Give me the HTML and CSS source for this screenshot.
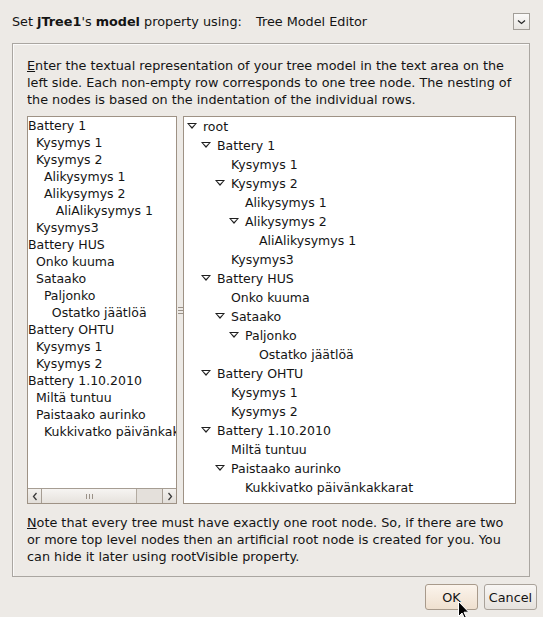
FILE: index.html
```html
<!DOCTYPE html>
<html>
<head>
<meta charset="utf-8">
<title>Tree Model Editor</title>
<link rel="stylesheet" href="styles.css">
</head>
<body>
<div class="dialog">
  <div class="header">
    <div class="title"><span class="label">Set <b>jTree1</b>'s <b>model</b> property using:</span><span class="editor">Tree Model Editor</span></div>
    <div class="combo"><svg width="9" height="6" viewBox="0 0 9 6"><path d="M1 1.5 L4.5 4.5 L8 1.5" fill="none" stroke="#2a2a2a" stroke-width="1.3"/></svg></div>
  </div>
  <div class="panel">
    <p class="desc"><u>E</u>nter the textual representation of your tree model in the text area on the left side. Each non-empty row corresponds to one tree node. The nesting of the nodes is based on the indentation of the individual rows.</p>
    <div class="split">
      <div class="textarea">
        <div class="lines">Battery 1
  Kysymys 1
  Kysymys 2
    Alikysymys 1
    Alikysymys 2
       AliAlikysymys 1
  Kysymys3
Battery HUS
  Onko kuuma
  Sataako
    Paljonko
      Ostatko jäätlöä
Battery OHTU
  Kysymys 1
  Kysymys 2
Battery 1.10.2010
  Miltä tuntuu
  Paistaako aurinko
    Kukkivatko päivänkakkarat</div>
        <div class="hscroll">
          <div class="sb-btn left"><svg width="6" height="9" viewBox="0 0 6 9"><path d="M4.5 1 L1.5 4.5 L4.5 8" fill="none" stroke="#3a3a3a" stroke-width="1.3"/></svg></div>
          <div class="thumb"><span class="grip"></span><span class="grip"></span><span class="grip"></span></div>
          <div class="track"></div>
          <div class="sb-btn right"><svg width="6" height="9" viewBox="0 0 6 9"><path d="M1.5 1 L4.5 4.5 L1.5 8" fill="none" stroke="#3a3a3a" stroke-width="1.3"/></svg></div>
        </div>
      </div>
      <div class="divider"><span></span><span></span><span></span></div>
      <div class="tree">
        <div class="row" style="padding-left:3px"><span class="tog open"></span>root</div>
        <div class="row" style="padding-left:17px"><span class="tog open"></span>Battery 1</div>
        <div class="row" style="padding-left:31px"><span class="tog"></span>Kysymys 1</div>
        <div class="row" style="padding-left:31px"><span class="tog open"></span>Kysymys 2</div>
        <div class="row" style="padding-left:45px"><span class="tog"></span>Alikysymys 1</div>
        <div class="row" style="padding-left:45px"><span class="tog open"></span>Alikysymys 2</div>
        <div class="row" style="padding-left:59px"><span class="tog"></span>AliAlikysymys 1</div>
        <div class="row" style="padding-left:31px"><span class="tog"></span>Kysymys3</div>
        <div class="row" style="padding-left:17px"><span class="tog open"></span>Battery HUS</div>
        <div class="row" style="padding-left:31px"><span class="tog"></span>Onko kuuma</div>
        <div class="row" style="padding-left:31px"><span class="tog open"></span>Sataako</div>
        <div class="row" style="padding-left:45px"><span class="tog open"></span>Paljonko</div>
        <div class="row" style="padding-left:59px"><span class="tog"></span>Ostatko jäätlöä</div>
        <div class="row" style="padding-left:17px"><span class="tog open"></span>Battery OHTU</div>
        <div class="row" style="padding-left:31px"><span class="tog"></span>Kysymys 1</div>
        <div class="row" style="padding-left:31px"><span class="tog"></span>Kysymys 2</div>
        <div class="row" style="padding-left:17px"><span class="tog open"></span>Battery 1.10.2010</div>
        <div class="row" style="padding-left:31px"><span class="tog"></span>Miltä tuntuu</div>
        <div class="row" style="padding-left:31px"><span class="tog open"></span>Paistaako aurinko</div>
        <div class="row" style="padding-left:45px"><span class="tog"></span>Kukkivatko päivänkakkarat</div>
      </div>
    </div>
    <p class="note"><u>N</u>ote that every tree must have exactly one root node. So, if there are two or more top level nodes then an artificial root node is created for you. You can hide it later using rootVisible property.</p>
  </div>
  <div class="buttons">
    <button class="btn ok">OK</button>
    <button class="btn">Cancel</button>
  </div>
  <svg class="cursor" width="12" height="19" viewBox="0 0 12 19"><path d="M0.5 0.5 L0.5 15.5 L4 12 L6.5 17.5 L8.5 16.6 L6 11.2 L10.8 11.2 Z" fill="#000" stroke="#fff" stroke-width="1"/></svg>
</div>
</body>
</html>
```
FILE: styles.css
```css
html, body {
  margin: 0;
  padding: 0;
}
body {
  background: #edeae6;
  font-family: "DejaVu Sans", sans-serif;
  font-size: 12.8px;
  color: #141414;
  width: 543px;
  height: 617px;
  overflow: hidden;
}
.dialog {
  position: relative;
  width: 543px;
  height: 617px;
}
.header {
  height: 43px;
  display: flex;
  align-items: center;
  justify-content: space-between;
  padding: 0 13px 0 12px;
  box-sizing: border-box;
}
.title {
  white-space: nowrap;
}
.label {
  display: inline-block;
  width: 244px;
}
.combo {
  width: 17px;
  height: 17px;
  box-sizing: border-box;
  border: 1px solid #a29e98;
  background: linear-gradient(#fbfaf9, #e8e5e1);
  display: flex;
  align-items: center;
  justify-content: center;
}
.panel {
  margin: 0 13px 0 12px;
  height: 534px;
  box-sizing: border-box;
  border: 1px solid #aaa6a1;
  box-shadow: inset 1px 1px 0 #fbfaf9;
  padding: 13px 13px 0 14px;
}
.desc, .note {
  margin: 0;
  line-height: 17px;
}
.split {
  display: flex;
  height: 388px;
  margin-top: 8px;
}
.textarea {
  width: 150px;
  box-sizing: border-box;
  border: 1px solid #9e9285;
  background: #fff;
  display: flex;
  flex-direction: column;
}
.lines {
  flex: 1;
  white-space: pre;
  overflow: hidden;
  font-size: 12.5px;
  line-height: 17px;
}
.hscroll {
  height: 14px;
  display: flex;
  border-top: 1px solid #a69d93;
  background: #e2ded9;
}
.sb-btn {
  width: 14px;
  box-sizing: border-box;
  background: linear-gradient(#f3f1ee, #e2ded9);
  display: flex;
  align-items: center;
  justify-content: center;
}
.sb-btn.left {
  border-right: 1px solid #a69d93;
}
.sb-btn.right {
  border-left: 1px solid #a69d93;
}
.thumb {
  width: 95px;
  box-sizing: border-box;
  border-right: 1px solid #b3aba1;
  background: linear-gradient(#f6f4f2, #e6e2dd);
  display: flex;
  align-items: center;
  justify-content: center;
  gap: 2px;
}
.grip {
  width: 1px;
  height: 5px;
  background: #9a9187;
}
.track {
  flex: 1;
  background: #e4e0db;
}
.divider {
  width: 6px;
  display: flex;
  flex-direction: column;
  align-items: center;
  justify-content: center;
  gap: 2px;
}
.divider span {
  width: 5px;
  height: 1px;
  background: #9a9289;
}
.tree {
  flex: 1;
  box-sizing: border-box;
  border: 1px solid #9e9285;
  background: #fff;
  font-size: 12.5px;
}
.row {
  height: 19px;
  display: flex;
  align-items: center;
  white-space: nowrap;
}
.tog {
  width: 16px;
  height: 19px;
  flex: none;
  position: relative;
}
.tog.open::before {
  content: "";
  position: absolute;
  left: 0;
  top: 6px;
  width: 0;
  height: 0;
  border-left: 5px solid transparent;
  border-right: 5px solid transparent;
  border-top: 6px solid #1e1e1e;
}
.tog.open::after {
  content: "";
  position: absolute;
  left: 2px;
  top: 7px;
  width: 0;
  height: 0;
  border-left: 3px solid transparent;
  border-right: 3px solid transparent;
  border-top: 3.6px solid #fff;
}
.note {
  margin-top: 10px;
}
.buttons {
  display: flex;
  justify-content: flex-end;
  gap: 6px;
  padding-right: 6px;
  margin-top: 7px;
}
.btn {
  width: 53px;
  height: 26px;
  box-sizing: border-box;
  padding: 0;
  font-family: "DejaVu Sans", sans-serif;
  font-size: 12.8px;
  color: #141414;
  border: 1px solid #a9a29a;
  border-radius: 3px;
  background: linear-gradient(#f8f6f4, #e6e2dd);
}
.btn.ok {
  border-color: #a89a8b;
  background: linear-gradient(#fbf4ec, #efe0cf);
}
.cursor {
  position: absolute;
  left: 458px;
  top: 601px;
}
```
